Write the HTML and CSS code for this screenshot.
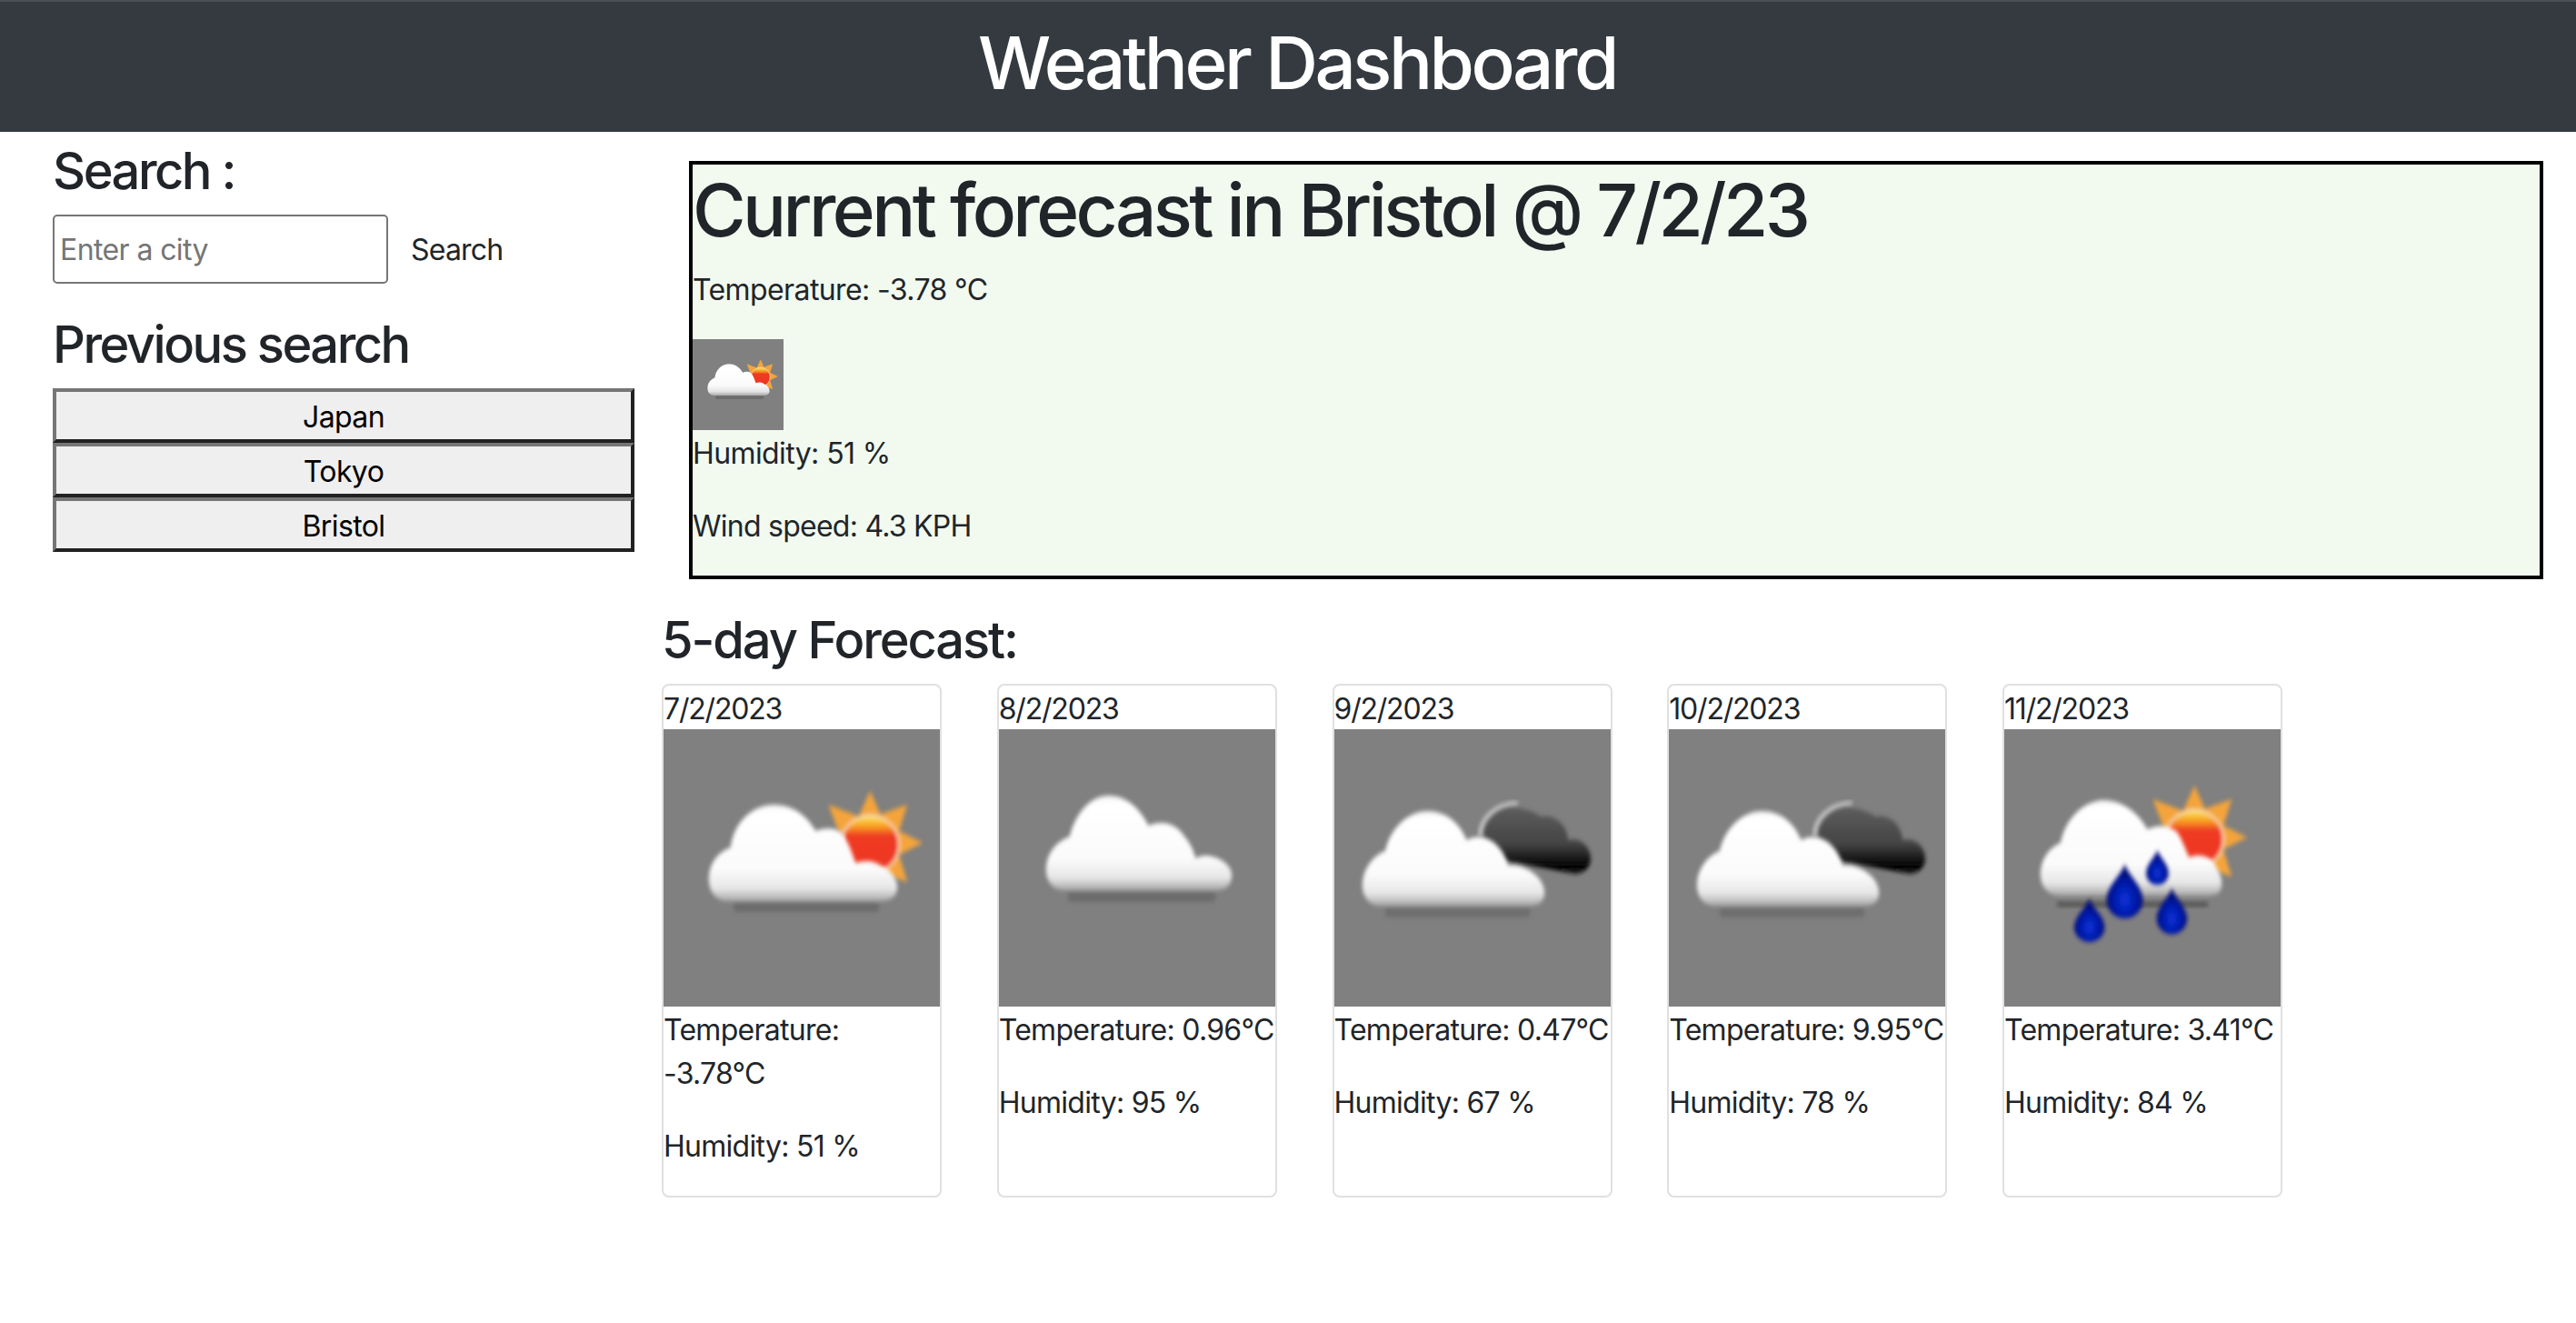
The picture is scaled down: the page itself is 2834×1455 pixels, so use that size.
FILE: index.html
```html
<!DOCTYPE html>
<html lang="en">
<head>
<meta charset="utf-8">
<title>Weather Dashboard</title>
<link rel="stylesheet" href="styles.css">
</head>
<body>
<svg class="defs" width="0" height="0" aria-hidden="true">
  <defs>
    <linearGradient id="cloudA" gradientUnits="userSpaceOnUse" x1="0" y1="83" x2="0" y2="190">
      <stop offset="0" stop-color="#f4f4f4"/><stop offset=".08" stop-color="#ffffff"/><stop offset=".66" stop-color="#fbfbfb"/><stop offset=".86" stop-color="#e6e6e6"/><stop offset="1" stop-color="#a4a4a4"/>
    </linearGradient>
    <linearGradient id="cloudB" gradientUnits="userSpaceOnUse" x1="0" y1="73" x2="0" y2="178">
      <stop offset="0" stop-color="#f4f4f4"/><stop offset=".08" stop-color="#ffffff"/><stop offset=".66" stop-color="#fbfbfb"/><stop offset=".86" stop-color="#e6e6e6"/><stop offset="1" stop-color="#a4a4a4"/>
    </linearGradient>
    <linearGradient id="cloudC" gradientUnits="userSpaceOnUse" x1="0" y1="90" x2="0" y2="195">
      <stop offset="0" stop-color="#f4f4f4"/><stop offset=".08" stop-color="#ffffff"/><stop offset=".66" stop-color="#fbfbfb"/><stop offset=".86" stop-color="#e6e6e6"/><stop offset="1" stop-color="#a4a4a4"/>
    </linearGradient>
    <linearGradient id="cloudD" gradientUnits="userSpaceOnUse" x1="0" y1="78" x2="0" y2="184">
      <stop offset="0" stop-color="#f4f4f4"/><stop offset=".08" stop-color="#ffffff"/><stop offset=".66" stop-color="#fbfbfb"/><stop offset=".86" stop-color="#e6e6e6"/><stop offset="1" stop-color="#a4a4a4"/>
    </linearGradient>
    <linearGradient id="cloudDark" gradientUnits="userSpaceOnUse" x1="0" y1="85" x2="0" y2="160">
      <stop offset="0" stop-color="#5e5e5e"/><stop offset=".55" stop-color="#444444"/><stop offset=".88" stop-color="#000000"/><stop offset="1" stop-color="#1c1c1c"/>
    </linearGradient>
    <linearGradient id="sunFill" x1="0" y1="0" x2="0" y2="1">
      <stop offset="0" stop-color="#fbe36a"/><stop offset=".13" stop-color="#f9b62c"/><stop offset=".24" stop-color="#f5811f"/><stop offset=".34" stop-color="#ee3b22"/><stop offset="1" stop-color="#ee3522"/>
    </linearGradient>
    <radialGradient id="dropFill" cx=".5" cy=".66" r=".5">
      <stop offset="0" stop-color="#0a33d8"/><stop offset=".65" stop-color="#0218a6"/><stop offset="1" stop-color="#000c78"/>
    </radialGradient>
    <filter id="soft" x="-10%" y="-10%" width="120%" height="120%"><feGaussianBlur stdDeviation="2.4"/></filter>
    <filter id="softer" x="-10%" y="-50%" width="120%" height="200%"><feGaussianBlur stdDeviation="2.4"/></filter>
    <g id="sun" filter="url(#soft)">
      <g fill="#f4a43a">
        <polygon points="0,-59 -14,-28 14,-28"/>
        <polygon points="41,-44 10,-33 31,-12"/>
        <polygon points="58,-2 30,-16 30,12"/>
        <polygon points="41,41 31,8 12,31"/>
        <polygon points="-46,-44 -33,-10 -12,-31"/>
      </g>
      <circle r="32" fill="url(#sunFill)" stroke="#f8e6c6" stroke-width="2"/>
    </g>
    <path id="drop" d="M0 -30 C3 -18 20 -6 20 10 A20 20 0 0 1 -20 10 C-20 -6 -3 -18 0 -30Z" fill="url(#dropFill)"/>
    <g id="scatterCloud">
      <rect x="77" y="190" width="161" height="11" rx="4" fill="#6c6c6c" filter="url(#softer)"/>
      <use href="#sun" transform="translate(228 127)"/>
      <path filter="url(#soft)" fill="url(#cloudA)" d="M72 189 C55 189 50 175 50 165 C50 148 60 135 74 130 C78 100 100 83 122 83 C145 83 160 98 168 112 C178 108 192 108 198 116 C205 126 208 136 212 147 C222 144 232 144 240 150 C252 155 258 165 258 174 C258 184 250 189 240 189 Z"/>
    </g>
    <g id="plainCloud">
      <rect x="76" y="179" width="163" height="11" rx="4" fill="#6c6c6c" filter="url(#softer)"/>
      <path filter="url(#soft)" fill="url(#cloudB)" d="M72 177 C58 177 52 165 52 155 C52 138 62 124 78 118 C85 90 103 73 121 73 C140 73 155 86 165 106 C178 100 195 102 205 118 C211 125 215 133 217 142 C230 133 257 145 257 160 C257 172 250 177 240 177 Z"/>
    </g>
    <g id="darkCloud">
      <path filter="url(#soft)" fill="url(#cloudDark)" d="M165 140 L165 112 C170 95 185 84 200 86 C215 88 222 92 228 96 C245 92 258 108 258 122 C272 118 283 130 283 142 C283 152 275 159 265 159 Z"/>
      <path d="M161 116 C161 98 178 82 201 81" fill="none" stroke="#d4d4d4" stroke-width="3.5" stroke-linecap="round" filter="url(#soft)"/>
      <rect x="56" y="196" width="160" height="11" rx="4" fill="#6e6e6e" filter="url(#softer)"/>
      <path filter="url(#soft)" fill="url(#cloudC)" d="M50 194 C37 194 31 182 31 172 C31 155 42 139 56 134 C62 108 82 90 103 90 C122 90 138 102 146 122 C165 112 185 125 192 150 C205 147 232 160 232 180 C232 190 225 194 215 194 Z"/>
    </g>
    <g id="rainSun">
      <rect x="58" y="190" width="167" height="5" rx="2" fill="#4f4f4f" filter="url(#softer)"/>
      <use href="#sun" transform="translate(210 121)"/>
      <path filter="url(#soft)" fill="url(#cloudD)" d="M62 183 C46 183 40 170 40 160 C40 143 50 130 62 125 C68 96 90 78 110 78 C130 78 148 92 158 110 C170 105 178 105 190 112 C197 122 200 132 204 141 C215 136 228 140 232 148 C236 155 240 160 240 170 C240 178 236 183 226 183 Z"/>
      <g filter="url(#soft)">
        <use href="#drop" transform="translate(94 210) scale(.84 .8)"/>
        <use href="#drop" transform="translate(133 178)"/>
        <use href="#drop" transform="translate(185 200) scale(.84 .85)"/>
        <use href="#drop" transform="translate(169 152) scale(.62 .64)"/>
      </g>
    </g>
  </defs>
</svg>

<header class="topbar"><h1 class="topbar-title">Weather Dashboard</h1></header>

<main class="layout">
  <aside class="sidebar">
    <h3 class="section-title">Search :</h3>
    <form class="search-form">
      <input class="search-input" type="text" placeholder="Enter a city">
      <button class="search-btn" type="button">Search</button>
    </form>
    <h3 class="section-title">Previous search</h3>
    <div class="history">
      <button class="history-btn" type="button">Japan</button>
      <button class="history-btn" type="button">Tokyo</button>
      <button class="history-btn" type="button">Bristol</button>
    </div>
  </aside>

  <section class="content">
    <div class="current">
      <h1 class="current-title">Current forecast in Bristol @ 7/2/23</h1>
      <p class="line">Temperature: -3.78 °C</p>
      <svg class="current-icon" viewBox="0 0 305 305"><use href="#scatterCloud"/></svg>
      <p class="line">Humidity: 51 %</p>
      <p class="line wind-line">Wind speed: 4.3 KPH</p>
    </div>

    <h3 class="section-title forecast-title">5-day Forecast:</h3>
    <div class="cards">
      <article class="card">
        <div class="card-date">7/2/2023</div>
        <svg class="card-icon" viewBox="0 0 305 305" preserveAspectRatio="none"><use href="#scatterCloud"/></svg>
        <p class="line card-line">Temperature: -3.78°C</p>
        <p class="line card-line">Humidity: 51 %</p>
      </article>
      <article class="card">
        <div class="card-date">8/2/2023</div>
        <svg class="card-icon" viewBox="0 0 305 305" preserveAspectRatio="none"><use href="#plainCloud"/></svg>
        <p class="line card-line">Temperature: 0.96°C</p>
        <p class="line card-line">Humidity: 95 %</p>
      </article>
      <article class="card">
        <div class="card-date">9/2/2023</div>
        <svg class="card-icon" viewBox="0 0 305 305" preserveAspectRatio="none"><use href="#darkCloud"/></svg>
        <p class="line card-line">Temperature: 0.47°C</p>
        <p class="line card-line">Humidity: 67 %</p>
      </article>
      <article class="card">
        <div class="card-date">10/2/2023</div>
        <svg class="card-icon" viewBox="0 0 305 305" preserveAspectRatio="none"><use href="#darkCloud"/></svg>
        <p class="line card-line">Temperature: 9.95°C</p>
        <p class="line card-line">Humidity: 78 %</p>
      </article>
      <article class="card">
        <div class="card-date">11/2/2023</div>
        <svg class="card-icon" viewBox="0 0 305 305" preserveAspectRatio="none"><use href="#rainSun"/></svg>
        <p class="line card-line">Temperature: 3.41°C</p>
        <p class="line card-line">Humidity: 84 %</p>
      </article>
    </div>
  </section>
</main>
</body>
</html>
```
FILE: styles.css
```css
* { box-sizing: border-box; }
html, body { margin: 0; padding: 0; }
body {
  background: #fff;
  color: #212529;
  font-family: Inter, "Noto Sans", "Liberation Sans", sans-serif;
  font-size: 32px;
  line-height: 48px;
  letter-spacing: -0.6px;
}
.defs { position: absolute; }

.topbar {
  height: 145px;
  background: #343a40;
  border-top: 2px solid #4b4f54;
  padding: 0 0 10px 20px;
  display: flex;
  justify-content: center;
  align-items: center;
}
.topbar-title {
  margin: 0;
  color: #fff;
  font-size: 80px;
  line-height: 96px;
  font-weight: 500;
  letter-spacing: -3.5px;
}

.layout { display: flex; align-items: flex-start; padding-left: 58px; }
.sidebar { width: 640px; flex: none; padding-top: 8px; }
.content { flex: 1; min-width: 0; margin-left: 30px; padding-right: 36px; padding-top: 32px; }

.section-title {
  margin: 0 0 14px;
  padding-top: 2px;
  font-size: 56px;
  line-height: 67px;
  font-weight: 500;
  letter-spacing: -2.5px;
}

.search-form { display: flex; align-items: center; margin-bottom: 32px; }
.search-input {
  width: 369px;
  height: 76px;
  padding: 0 6px;
  border: 2px solid #767676;
  border-radius: 5px;
  background: #fff;
  font: inherit;
  letter-spacing: inherit;
  color: #212529;
}
.search-input::placeholder { color: #757575; opacity: 1; }
.search-btn {
  margin-left: 25px;
  padding: 2px 0 0;
  border: 0;
  background: none;
  font: inherit;
  letter-spacing: -0.8px;
  color: #212529;
}

.history { display: flex; flex-direction: column; }
.history-btn {
  height: 60px;
  padding: 4px 0 0;
  border-width: 4px;
  border-style: solid;
  border-color: #767676 #212121 #212121 #767676;
  background: #efefef;
  font: inherit;
  letter-spacing: inherit;
  color: #000;
}

.current {
  margin-left: 30px;
  border: 4px solid #000;
  background: #f2faf0;
  height: 460px;
}
.current-title {
  margin: 0 0 14px;
  padding-top: 2px;
  font-size: 80px;
  line-height: 96px;
  font-weight: 500;
  letter-spacing: -3.6px;
}
.line { margin: 0 0 30px; padding-top: 2px; }
.wind-line { letter-spacing: -0.75px; }
.current-icon { display: block; width: 100px; height: 100px; background: #808080; }

.forecast-title { margin-top: 32px; letter-spacing: -2.1px; }

.cards { display: flex; gap: 60.75px; }
.card {
  width: 308px;
  flex: none;
  border: 2px solid #e0e0e0;
  border-radius: 8px;
  display: flex;
  flex-direction: column;
}
.card-date { height: 48px; padding-top: 2px; letter-spacing: -1.2px; }
.card-icon { display: block; width: 100%; height: 305px; background: #808080; }
.card-line { letter-spacing: -0.72px; }
```
